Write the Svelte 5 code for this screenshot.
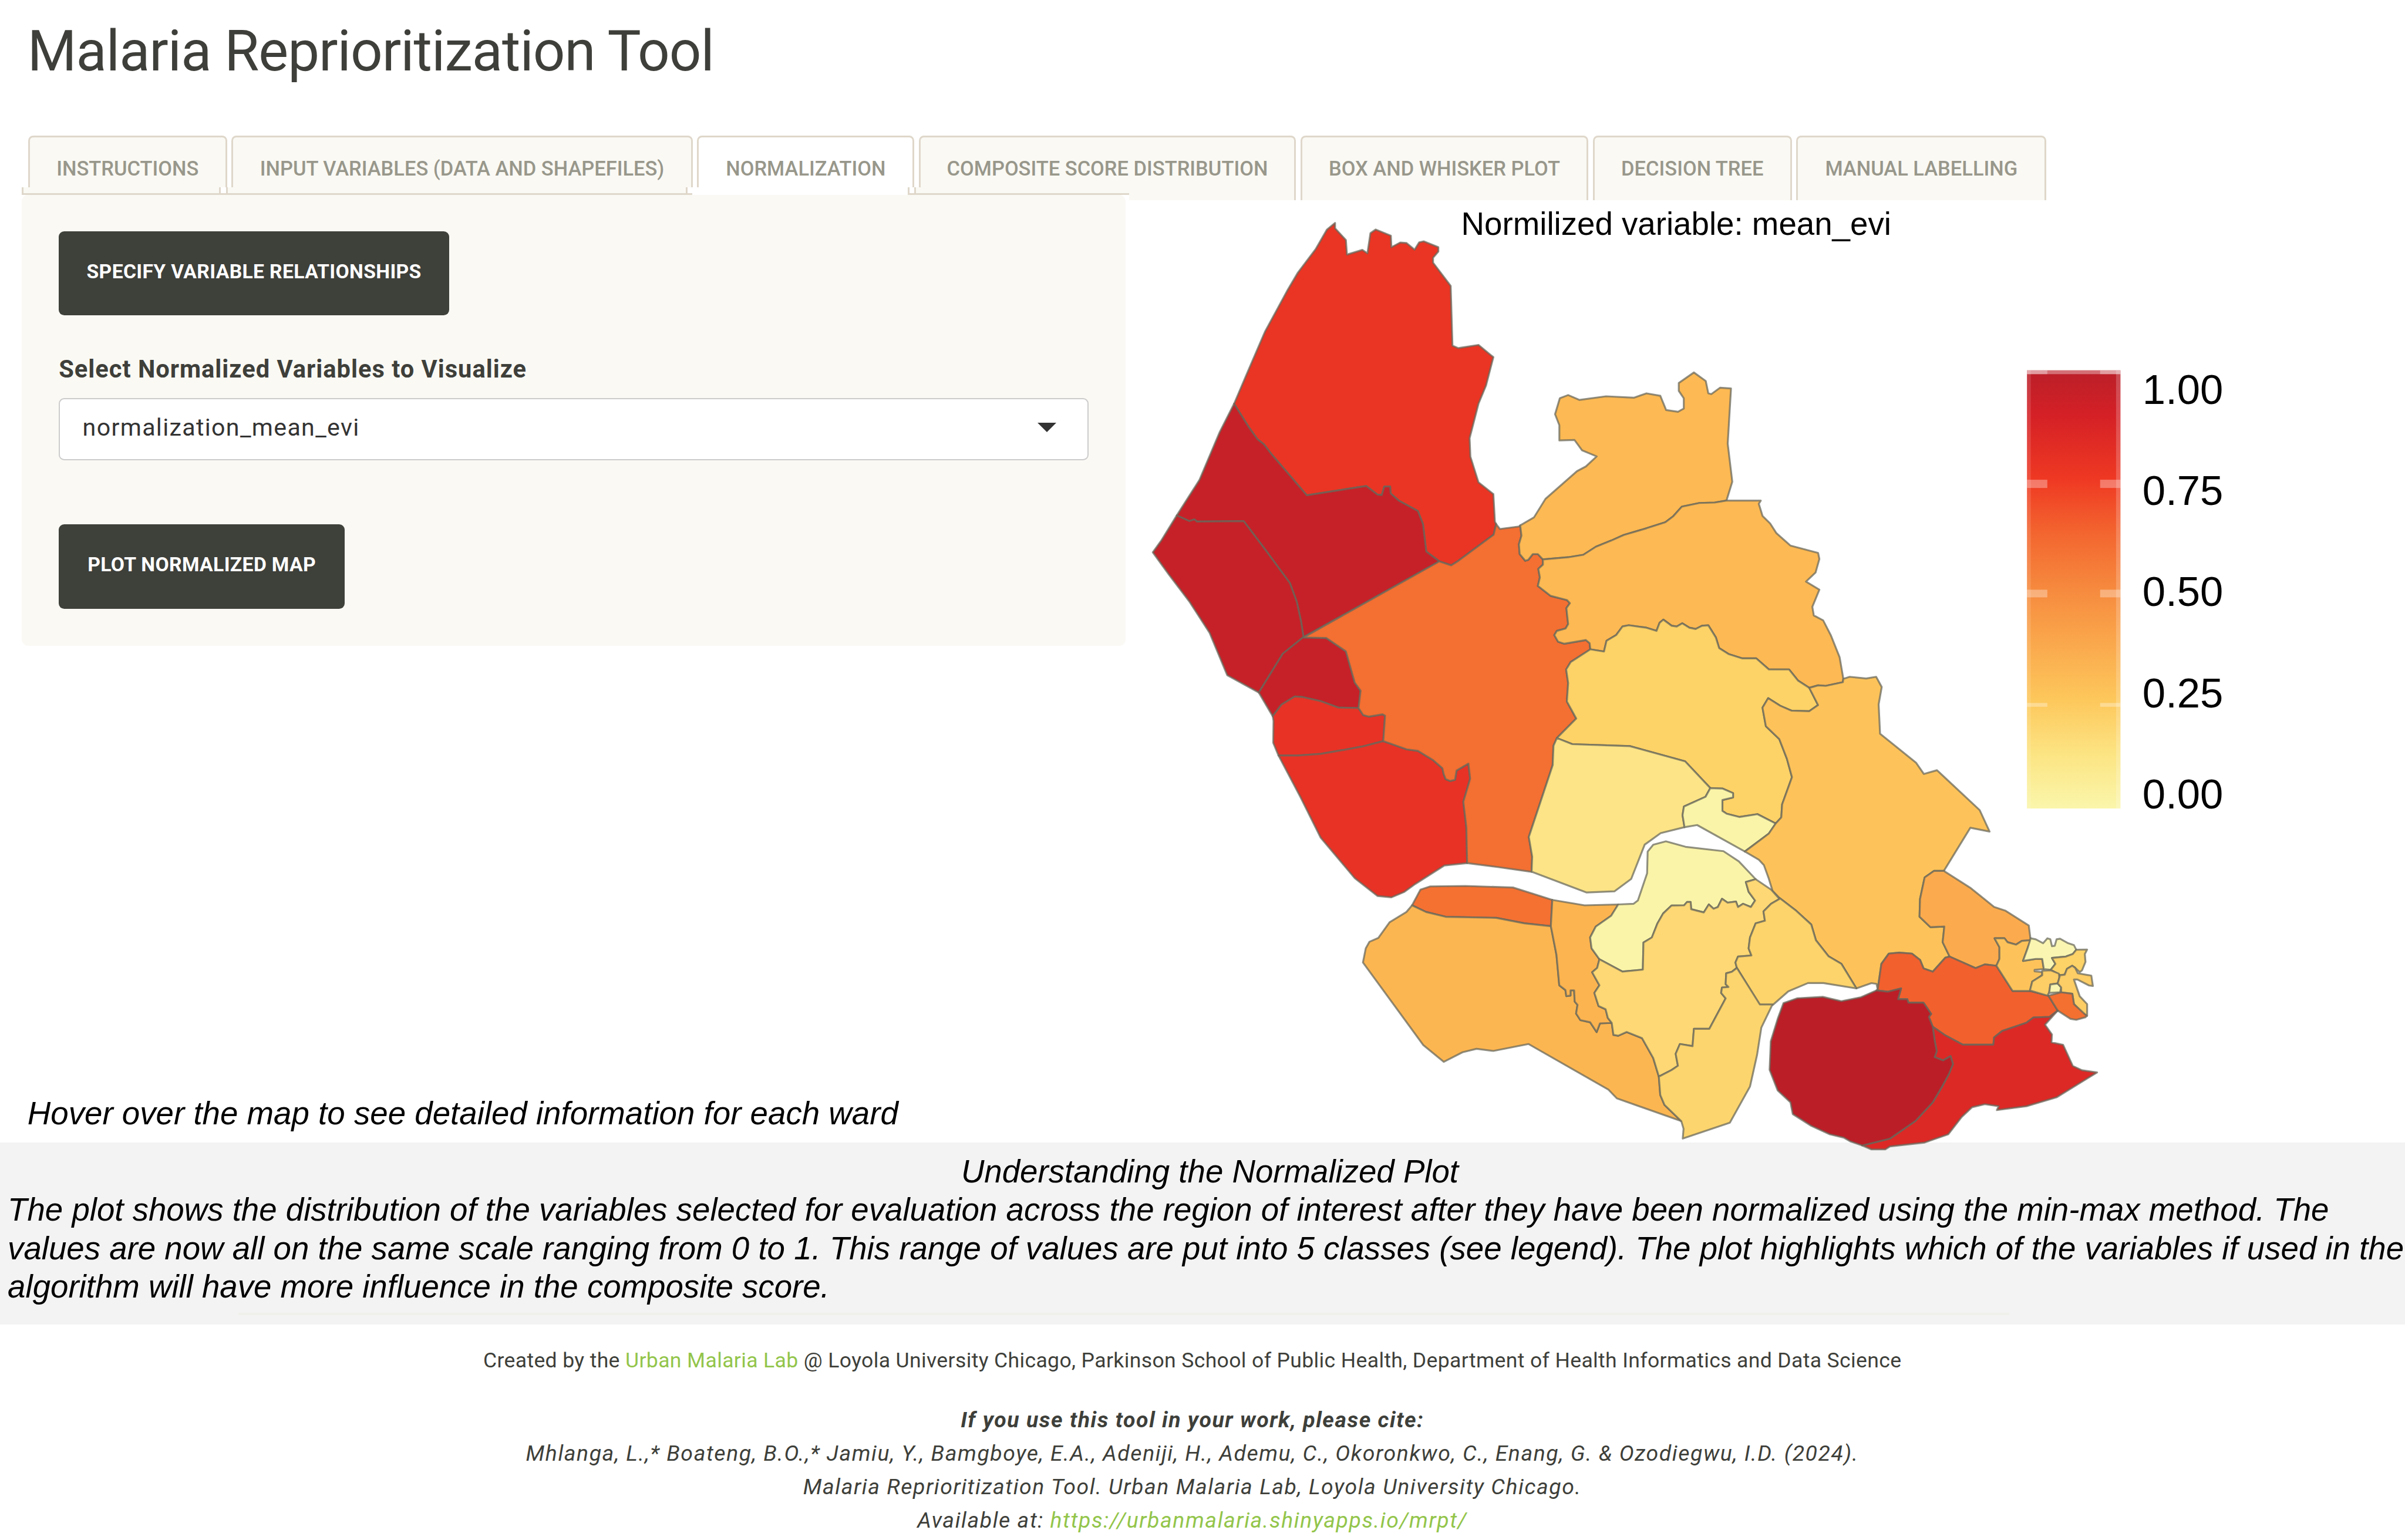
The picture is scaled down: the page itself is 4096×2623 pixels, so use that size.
<script>
  // Survey sheets: origin x, origin y, x scale, y scale.
  const sheets = {
    A: [2080, 380, 720 / 1568, 700 / 1568],
    B: [2080, 1000, 720 / 1568, 660 / 1568],
    C: [2700, 640, 720 / 1568, 700 / 1568],
    D: [2440, 1500, 800 / 1568, 620 / 1568],
    E: [2780, 1250, 800 / 1568, 620 / 1568],
    F: [3180, 1550, 660 / 1568, 560 / 1568],
    R: [0, 0, 1, 1]
  };

  function line(text) {
    let s = sheets.R;
    const out = [];
    for (const tok of text.trim().split(/\s+/)) {
      if (sheets[tok]) { s = sheets[tok]; continue; }
      const [x, y] = tok.split(',').map(Number);
      out.push([s[0] + x * s[2], s[1] + y * s[3]]);
    }
    return out;
  }
  const rev = (l) => [...l].reverse();

  // Borders shared by two wards
  const e12 = line('A 357,795 415,890 450,940 475,960 505,1000 580,1090 645,1168 880,1130 925,1165 942,1167 952,1132 975,1132 977,1160 1010,1190 1085,1232 1105,1285 1118,1397 1170,1437');
  const e23 = line('A 130,1250 180,1273 200,1266 210,1275 395,1273 B 480,0 578,145 605,225 622,310 632,378');
  const e34 = line('B 632,378 550,450 455,618');
  const e45 = line('B 510,720 545,670 597,635 630,638 700,655 770,683 850,685');
  const e47 = line('B 632,380 722,382 800,440 835,575 858,610 850,685');
  const e57 = line('B 850,685 868,715 890,722 945,712 955,718 948,828');
  const e56 = line('B 533,890 610,890 700,883 780,868 870,850 948,828');
  const e67 = line('B 948,828 1040,863 1085,870 1145,910 1182,945 1187,970 1195,992 1213,1000 1232,995 1238,955 1285,925 1292,990 1265,1090 1277,1200 1280,1355');
  const e17 = line('A 1170,1437 1217,1453 1245,1435 1385,1328 1395,1285');
  const e87 = line('C 140,708 145,750 135,785 138,825 160,852 172,848 190,825 210,825 230,847');
  const e97 = line('C 230,847 230,868 212,885 218,920 210,955 260,995 325,1012 337,1025 323,1045 330,1110 320,1128 285,1138 275,1155 290,1182 315,1190 400,1175 415,1188 418,1213');
  const e107 = line('C 418,1213 340,1265 322,1295 330,1350 325,1425 362,1495 E 100,235');
  const e117 = line('E 100,235 88,270 85,360 0,690 12,780 10,850');
  const e89 = line('C 230,847 330,838 390,828 440,795 500,770 550,747 640,720 715,695 745,672 780,632 850,617 910,615 957,607');
  const e910 = line('C 418,1213 472,1222 482,1178 520,1155 545,1120 570,1115 640,1125 680,1138 692,1105 707,1092 740,1117 760,1120 782,1107 810,1125 835,1130 860,1117 885,1115 915,1165 928,1208 965,1232 1020,1250 1075,1250 1125,1295 1205,1295 1240,1340 1285,1370');
  const e1310 = line('C 1285,1370 1320,1440 1285,1465 1215,1463 1170,1443 1122,1412 E 833,95 845,180 893,240 920,330 938,415 903,540 900,600 880,628');
  const e1012 = line('E 880,628 815,585 750,598 705,583 690,570 690,520 728,508 728,488 690,467 647,465');
  const e1011 = line('E 647,465 557,342 360,272 155,263 100,235');
  const e1112 = line('E 647,465 630,505 553,550 548,590 555,645');
  const e1213 = line('E 880,628 855,675 770,757');
  const e913 = line('C 1285,1370 1320,1360 1350,1362 1418,1347 1420,1333');
  const e1314 = line('F 843,97 800,97 760,130 740,240 738,330 785,383 845,380 838,460 868,533');
  const e1315 = line('F 868,533 850,538 795,610 755,593 740,550 705,518 650,513 605,518 573,570 557,700');
  const e1330 = line('F 465,695 400,570 345,532 290,450 270,370 205,300 133,235');
  const e1415 = line('F 868,533 980,592 1020,573 1070,580');
  const e1416 = line('F 1070,580 1083,545 1083,485 1062,440 1105,440 1118,460 1155,472 1180,453 1218,450');
  const e1524 = line('F 552,705 600,712 658,695 645,750 685,750 690,768 755,768 788,825 778,840 795,890');
  const e1523 = line('F 795,890 850,935 925,982 1057,982 1060,945 1095,912 1200,870 1230,843 1300,840 1335,808');
  const e2324 = line('F 795,890 803,960 812,1015 803,1045 840,1062 872,1040 882,1080 865,1130 835,1195 795,1275 720,1370 610,1460 490,1495');
  const e2526 = line('D 250,372 300,403 370,425 550,430 650,455 745,468');
  const e2627 = line('D 745,468 765,600 775,740 797,762 800,790 815,787 815,763 828,763 830,815 840,830 835,870 850,900 885,910 908,955 920,915 962,913');
  const e2728 = line('D 985,368 960,420 905,470 885,520 890,570 918,620');
  const e2729 = line('D 918,620 910,660 892,680 918,740 900,775 915,835 940,850 948,890 962,913');
  const e2629 = line('D 962,913 968,968 985,972 1015,955 1070,983 1110,1075 1130,1160');
  const e2829 = line('D 918,620 1000,677 1073,668 1075,543 1105,520 1125,455 1145,410 1175,373 1220,372 1230,357 1243,357 1245,390 1290,405 1308,368 1325,388 1340,380 1355,342 1375,360 1405,355 1412,380 1430,365 1458,380 1473,350 1450,310 1440,265 1475,252');
  const e2930 = line('D 1560,343 1530,365 1503,400 1508,443 1475,455 1455,520 1450,570 1460,603 1412,608 1403,635 1408,660');
  const e2931 = line('D 1408,660 1390,678 1370,685 1368,735 1378,748 1355,750 1352,775 1368,800 1335,880 1310,940 1255,940 1250,1020 1205,1010 1190,1055 1198,1110 1175,1130 1130,1160');
  const e2631 = line('D 1130,1160 1135,1245 1150,1290 1210,1365');

  const wards = [
    ['#ea3524', line('A 757,58 757,80 800,128 804,187 865,168 885,182 897,100 918,85 978,110 980,157 1015,138 1040,140 1072,167 1090,137 1108,133 1166,157 1166,175 1145,200 1145,220 1215,315 1222,558 1245,568 1325,555 1384,605 1355,720 1325,795 1290,935 1293,1010 1325,1115 1384,1163 1390,1275 1395,1285'), rev(e17), rev(e12), line('A 415,655 480,500 570,330 610,260 680,165 725,85')],
    ['#c62128', e12, line('B 632,378'), rev(e23), line('A 220,1105 300,910')],
    ['#c62128', e23, e34, line('B 330,543 260,360 180,225 100,110 35,12 A 70,1350')],
    ['#c62128', e47, rev(e45), line('B 455,618'), rev(e34)],
    ['#e83226', e45, e57, rev(e56), line('B 512,835 513,740')],
    ['#e83226', e56, e67, line('B 1190,1365 1075,1445 1030,1480 980,1503 925,1497 835,1420 700,1245 620,1070')],
    ['#f36f32', e17, line('A 1410,1305 1485,1295'), e87, e97, e107, e117, line('B 1530,1392 1400,1372 1280,1355'), rev(e67), rev(e57), rev(e47)],
    ['#fdb953', line('C 195,675 240,600 365,487 400,468 443,427 385,402 355,360 295,362 295,300 278,255 297,190 330,177 375,197 480,182 590,188 640,170 695,180 718,238 765,245 788,232 788,190 768,160 768,128 828,85 875,120 885,170 897,173 932,147 975,150 962,375 980,530'), rev(e89), rev(e87)],
    ['#fdb953', e89, line('C 1093,607 1085,620 1100,670 1130,700 1155,740 1210,790 1320,820 1325,845 1310,900 1272,937 1325,970 1297,1040 1303,1075 1340,1095 1370,1155 1405,1245'), rev(e913), rev(e910), rev(e97)],
    ['#fdd267', e910, e1310, e1012, e1011, rev(e107)],
    ['#fce487', rev(e1011), e1112, line('E 470,672 413,725 365,883 305,940 205,945'), rev(e117)],
    ['#faf4a8', rev(e1012), e1213, line('E 600,635'), rev(e1112)],
    ['#fdc35a', e913, line('C 1445,1325 1510,1332 1550,1325 E 1258,0 1247,80 1252,215 1380,348 1408,400 1455,383 R 3600,1474 3618,1513 3583,1506'), e1314, e1315, line('F 552,672 530,668'), e1330, line('F 100,195 E 868,935 855,880 838,820 820,795'), rev(e1213), rev(e1310)],
    ['#fbab4d', rev(e1314), line('F 960,185 1060,280 1110,300 1210,375'), rev(e1416), rev(e1415)],
    ['#f2602e', rev(e1315), e1415, line('F 1140,708 1215,708 1295,732'), rev(e1523), rev(e1524)],
    ['#fdc35a', e1416, line('F 1205,490 1185,555 1240,545 1268,545 1275,597 1235,600 1235,608 1268,612 1268,628 1225,660 1215,708 1140,708')],
    ['#faf6b2', line('F 1218,440 1240,445 1272,465 1290,440 1303,445 1310,480 1322,478 1330,445 1345,442 1380,465 1405,475 1415,498 1400,520 1370,533 1310,540 1325,570 1305,600 1275,597 1268,545 1240,545 1185,555 1205,490')],
    ['#fdd267', line('F 1415,498 1462,497 1452,520 1455,560 1440,603 1430,612 1410,590 1398,580 1375,595 1365,625 1345,628 1305,600 1325,570 1310,540 1370,533 1400,520')],
    ['#fdcd66', line('F 1268,605 1305,603 1340,620 1342,640 1335,670 1303,675 1298,715 1290,732 1215,706 1225,660 1268,628')],
    ['#faf6b2', line('F 1303,675 1335,670 1350,690 1345,715 1298,718')],
    ['#fdcd66', line('F 1345,628 1365,625 1375,595 1398,580 1410,590 1422,618 1480,630 1487,683 1470,680 1420,650 1405,650 1430,735 1462,775 1462,835 1440,820 1405,775 1398,722 1350,715 1350,690 1335,670 1342,640')],
    ['#f47030', line('F 1295,732 1350,715 1398,722 1405,775 1460,835 1455,842 1415,855 1390,850 1335,808')],
    ['#dc2926', e1523, line('F 1280,880 1310,930 1308,970 1358,982 1400,1090 1440,1112 1505,1123 1330,1250 1200,1295 1072,1315 1080,1295 1020,1285 965,1300 920,1350 862,1438 760,1480 610,1500 590,1515 530,1515'), rev(e2324)],
    ['#bb1e27', e1524, e2324, line('F 440,1475 410,1455 350,1438 270,1395 190,1335 180,1275 125,1215 90,1110 95,965 125,850 150,770 210,745 320,738 400,760 485,740')],
    ['#f47132', line('D 250,372 280,300 315,285 440,283 610,290 750,347'), rev(e2526)],
    ['#fcb651', e2526, e2627, e2629, e2631, line('D 980,1260 950,1220 665,1010 540,1042 480,1032 430,1048 363,1092 290,1015 75,635 85,570 98,540 130,522 170,450 230,403')],
    ['#fcb450', line('D 750,347 865,372'), e2728, e2729, rev(e2627)],
    ['#faf4a8', line('D 985,368 1040,365 1055,350 1088,225 1090,125 1110,93 1155,78 1225,103 1360,123 1415,170'), rev(e2829), rev(e2728)],
    ['#fdd874', e2829, line('D 1530,300'), e2930, e2931, rev(e2629), rev(e2729)],
    ['#fdd46b', rev(e1330), line('E 1050,1362 995,1362 925,1400 870,1462 822,1462'), rev(e2930)],
    ['#fcd56e', line('D 1408,660 1490,828 1535,828 1495,935 1480,1060 1455,1205 1383,1372 1215,1445 1218,1400'), rev(e2631), rev(e2931)]
  ].map(([fill, ...parts]) => ({
    fill,
    points: parts.flat().map(([x, y]) => x.toFixed(1) + ',' + y.toFixed(1)).join(' ')
  }));

  const tabs = [
    { label: 'INSTRUCTIONS', cls: 't1' },
    { label: 'INPUT VARIABLES (DATA AND SHAPEFILES)', cls: 't2' },
    { label: 'NORMALIZATION', cls: 't3', active: true },
    { label: 'COMPOSITE SCORE DISTRIBUTION', cls: 't4' },
    { label: 'BOX AND WHISKER PLOT', cls: 't5' },
    { label: 'DECISION TREE', cls: 't6' },
    { label: 'MANUAL LABELLING', cls: 't7' }
  ];

  const legend = [['1.00', 735], ['0.75', 919], ['0.50', 1103], ['0.25', 1287], ['0.00', 1471]];
</script>

<div class="page">
  <h1>Malaria Reprioritization Tool</h1>

  <nav class="tabs">
    {#each tabs as t}
      <span class="tab {t.cls}" class:active={t.active}>{t.label}</span>
    {/each}
    <div class="strip">
      {#each tabs as t}
        <i class={t.cls} class:active={t.active}></i>
      {/each}
    </div>
  </nav>

  <main>
    <div class="left">
      <section class="panel">
        <button class="b1">SPECIFY VARIABLE RELATIONSHIPS</button>
        <div class="label">Select Normalized Variables to Visualize</div>
        <div class="select"><span>normalization_mean_evi</span><i class="caret"></i></div>
        <button class="b2">PLOT NORMALIZED MAP</button>
      </section>
      <p class="hover">Hover over the map to see detailed information for each ward</p>
    </div>
    <svg class="plot" viewBox="2053 355 2321 1723">
      <defs>
        <linearGradient id="ramp" x1="0" y1="0" x2="0" y2="1">
          <stop offset="0" stop-color="#ba1f29" />
          <stop offset="0.1" stop-color="#d42026" />
          <stop offset="0.25" stop-color="#ef3923" />
          <stop offset="0.37" stop-color="#f3652f" />
          <stop offset="0.5" stop-color="#f68a3e" />
          <stop offset="0.62" stop-color="#faa74c" />
          <stop offset="0.75" stop-color="#fdc75b" />
          <stop offset="0.88" stop-color="#fce584" />
          <stop offset="1" stop-color="#faf6ab" />
        </linearGradient>
      </defs>
      <g class="wards">
        {#each wards as w}
          <polygon points={w.points} fill={w.fill} />
        {/each}
      </g>
      <text class="title" x="2657" y="428">Normilized variable: mean_evi</text>
      <rect x="3686" y="674" width="170" height="797" fill="url(#ramp)" />
      <g fill="#fff">
        <rect x="3686" y="674" width="7" height="797" opacity="0.12" />
        <rect x="3848" y="674" width="8" height="797" opacity="0.2" />
        <rect x="3686" y="674" width="170" height="7" opacity="0.36" />
        {#each [[674, 7], [873, 15], [1073, 14], [1279, 7]] as [y, h]}
          <rect x="3686" {y} width="37" height={h} opacity="0.32" />
          <rect x="3819" {y} width="37" height={h} opacity="0.32" />
        {/each}
      </g>
      {#each legend as [t, y]}
        <text class="num" x="3896" {y}>{t}</text>
      {/each}
    </svg>
  </main>

  <section class="about">
    <p class="head">Understanding the Normalized Plot</p>
    <p>The plot shows the distribution of the variables selected for evaluation across the region of interest after they have been normalized using the min-max method. The</p>
    <p>values are now all on the same scale ranging from 0 to 1. This range of values are put into 5 classes (see legend). The plot highlights which of the variables if used in the</p>
    <p>algorithm will have more influence in the composite score.</p>
    <div class="rule"></div>
  </section>

  <footer>
    <p class="f1">Created by the <a href="#lab">Urban Malaria Lab</a> @ Loyola University Chicago, Parkinson School of Public Health, Department of Health Informatics and Data Science</p>
    <p class="f2">If you use this tool in your work, please cite:</p>
    <p>Mhlanga, L.,* Boateng, B.O.,* Jamiu, Y., Bamgboye, E.A., Adeniji, H., Ademu, C., Okoronkwo, C., Enang, G. &amp; Ozodiegwu, I.D. (2024).</p>
    <p>Malaria Reprioritization Tool. Urban Malaria Lab, Loyola University Chicago.</p>
    <p>Available at: <a href="#mrpt">https://urbanmalaria.shinyapps.io/mrpt/</a></p>
  </footer>
</div>

<style>
  :global(html) { font-size: 9.3644px; }
  :global(body) { background: #fff; }
  .page { width: 437.4rem; height: 280.1rem; overflow: hidden; display: flex; flex-direction: column; font-family: Roboto, sans-serif; color: #3e3f3a; }
  .page * { box-sizing: border-box; }
  p, h1 { margin: 0; white-space: nowrap; }
  h1 { height: 24.7rem; flex: none; padding: 3.3rem 0 0 5rem; font-size: 10.25rem; line-height: 12rem; font-weight: 400; letter-spacing: -0.107rem; }
  .tabs { height: 10.8rem; flex: none; display: flex; gap: 0.8rem; padding-left: 5.1rem; position: relative; align-items: flex-start; }
  .tab { height: 11.7rem; border: 0.35rem solid #dfd7ca; border-bottom: 0; border-radius: 0.9rem 0.9rem 0 0; background: #faf9f4; color: #98978b; font-size: 3.68rem; font-weight: 500; line-height: 11.5rem; text-align: center; white-space: nowrap; flex: none; }
  .tab.active { background: #fff; }
  .t1 { width: 36.2rem; }
  .t2 { width: 83.9rem; }
  .t3 { width: 39.5rem; }
  .t4 { width: 68.6rem; }
  .t5 { width: 52.4rem; }
  .t6 { width: 36.2rem; }
  .t7 { width: 45.5rem; }
  /* Lower edge of the tab row, offset a little to the left of the tabs */
  .strip { position: absolute; left: 4rem; bottom: 0; width: 201.4rem; height: 1.4rem; overflow: hidden; display: flex; gap: 0.9rem; background: #fff; }
  .strip::before { content: ''; position: absolute; left: 0; right: 0; bottom: 0; height: 0.4rem; background: #dfd7ca; }
  .strip i { flex: none; height: 1.4rem; background: #faf9f4; border: 0.35rem solid #dfd7ca; border-top: 0; border-bottom-width: 0.4rem; }
  .strip i.active { position: relative; background: #fff; border-left: 0; border-bottom: 0; }
  main { flex: none; height: 172.3rem; display: flex; position: relative; z-index: 1; }
  .left { width: 205.3rem; background: #fff; display: flex; flex-direction: column; justify-content: space-between; }
  .panel { margin-left: 4rem; width: 200.7rem; height: 82rem; background: #faf9f4; border-radius: 1.2rem; padding: 6.6rem 6.7rem 0; display: flex; flex-direction: column; align-items: flex-start; }
  button { border: 0; border-radius: 1rem; background: #3e403a; color: #fff; font: 700 3.6rem/14.8rem Roboto, sans-serif; letter-spacing: 0.035rem; height: 15.3rem; padding: 0 0 0.5rem; white-space: nowrap; }
  .b1 { width: 71rem; }
  .b2 { width: 52rem; margin-top: 11.7rem; }
  .label { margin-top: 6.5rem; height: 6.4rem; font-size: 4.45rem; line-height: 6.6rem; font-weight: 700; letter-spacing: 0.105rem; white-space: nowrap; }
  .select { margin-top: 2.1rem; width: 187.3rem; height: 11.3rem; border: 0.3rem solid #ccc; border-radius: 1rem; background: #fff; color: #333; display: flex; justify-content: space-between; align-items: center; padding: 0 5.7rem 0.7rem 4.1rem; font-size: 4.4rem; letter-spacing: 0.14rem; }
  .caret { border: 1.75rem solid transparent; border-top-color: #333; border-bottom: 0; }
  .hover { padding-left: 5rem; margin-bottom: 1.7rem; font: italic 5.84rem/7rem "Liberation Sans", sans-serif; color: #000; }
  .plot { width: 232.1rem; height: 172.3rem; overflow: visible; flex: none; }
  .wards polygon { stroke: rgba(102, 102, 90, 0.72); stroke-width: 3.4; stroke-linejoin: round; }
  text { font-family: "Liberation Sans", sans-serif; fill: #000; }
  .title { font-size: 58.4px; }
  .num { font-size: 75.5px; }
  .about { flex: none; height: 33.1rem; background: #f3f3f3; padding: 1.8rem 0 0 1.4rem; color: #000; font: italic 5.835rem/7rem "Liberation Sans", sans-serif; }
  .head { padding-left: 173.4rem; }
  .rule { height: 0.4rem; width: 322rem; margin: 1.2rem 0 0 42rem; background: #f0f0eb; }
  footer { flex: none; text-align: center; height: 39.2rem; padding-right: 3.7rem; font-size: 4rem; font-style: italic; line-height: 6.1rem; letter-spacing: 0.165rem; }
  footer a { color: #93c54b; text-decoration: none; }
  .f1 { font-size: 3.8rem; font-style: normal; letter-spacing: 0.037rem; margin-top: 3.5rem; }
  .f2 { font-weight: 700; margin-top: 4.7rem; }
</style>
